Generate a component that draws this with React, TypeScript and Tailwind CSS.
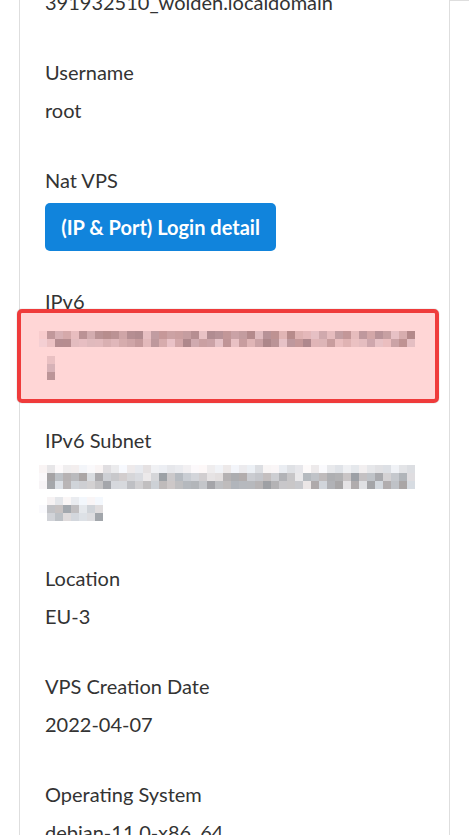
import React from 'react';

type Band = { y: number; x: number; cols: number; light?: boolean; fadeFirst?: boolean };

function makeRng(seed: number) {
  let s = seed % 2147483647;
  return () => {
    s = (s * 16807) % 2147483647;
    return (s - 1) / 2147483646;
  };
}

// pixelated (blurred) text, drawn as a grid of 8px cells
function Mosaic({ width, height, bands, seed }: { width: number; height: number; bands: Band[]; seed: number }) {
  const rnd = makeRng(seed);
  const cells: React.ReactNode[] = [];
  bands.forEach((b, bi) => {
    for (let i = 0; i < b.cols; i++) {
      let g: number;
      if (b.fadeFirst && i === 0) g = 244 + rnd() * 8;
      else if (b.light) g = 222 + rnd() * 28;
      else g = 160 + rnd() * 74;
      const tint = (rnd() - 0.5) * 10;
      const r = Math.round(g + tint);
      const gg = Math.round(g);
      const bl = Math.round(g - tint * 0.6 + 3);
      cells.push(
        <rect
          key={`${bi}-${i}`}
          x={b.x + i * 8}
          y={b.y}
          width={8}
          height={8}
          fill={`rgb(${r},${gg},${bl})`}
        />
      );
    }
  });
  return (
    <svg width={width} height={height} className="block -ml-[6px] shrink-0">
      {cells}
    </svg>
  );
}

function Label({ children, className = '' }: { children: React.ReactNode; className?: string }) {
  return <div className={`leading-[30px] ${className}`}>{children}</div>;
}

export default function App() {
  return (
    <div className="h-[835px] overflow-hidden bg-white font-['Lato','Noto_Sans',sans-serif] text-[20px] text-[#333333]">
      <div className="flex h-full">
        <div className="w-[19px] shrink-0" />
        <div className="w-[431px] shrink-0 border-x border-[#dedede] px-[25px]">
          <div className="flex flex-col">
            <Label className="-mt-[13px]">391932510_wolden.localdomain</Label>

            <Label className="mt-[40px]">Username</Label>
            <Label className="mt-[8px]">root</Label>

            <Label className="mt-[40px]">Nat VPS</Label>
            <div className="mt-[8px]">
              <button className="flex h-[48px] w-[231px] items-center justify-center rounded-[5px] bg-[#1184dc] font-bold text-white">
                (IP &amp; Port) Login detail
              </button>
            </div>

            <Label className="mt-[35px]">IPv6</Label>
            <div className="relative mt-[8px] h-[60px]">
              <Mosaic
                width={376}
                height={60}
                seed={97}
                bands={[
                  { y: 7, x: 0, cols: 47, fadeFirst: true },
                  { y: 15, x: 0, cols: 47, fadeFirst: true },
                  { y: 32, x: 8, cols: 1, light: true },
                  { y: 40, x: 8, cols: 1 },
                  { y: 48, x: 8, cols: 1 },
                ]}
              />
              <div className="absolute -left-[28px] -right-[15px] -top-[15px] -bottom-[19px] rounded-[5px] border-4 border-[#ef3b3b] bg-[rgba(255,0,0,0.16)] shadow-[0_0_1px_rgba(0,0,0,0.5)]" />
            </div>

            <Label className="mt-[41px]">IPv6 Subnet</Label>
            <div className="mt-[8px] h-[60px]">
              <Mosaic
                width={376}
                height={60}
                seed={4242}
                bands={[
                  { y: 2, x: 0, cols: 47, light: true, fadeFirst: true },
                  { y: 10, x: 0, cols: 47, fadeFirst: true },
                  { y: 18, x: 0, cols: 47, fadeFirst: true },
                  { y: 34, x: 8, cols: 7, light: true },
                  { y: 42, x: 0, cols: 8, fadeFirst: true },
                  { y: 50, x: 8, cols: 7 },
                ]}
              />
            </div>

            <Label className="mt-[40px]">Location</Label>
            <Label className="mt-[8px]">EU-3</Label>

            <Label className="mt-[40px]">VPS Creation Date</Label>
            <Label className="mt-[8px]">2022-04-07</Label>

            <Label className="mt-[40px]">Operating System</Label>
            <Label className="mt-[8px]">debian-11.0-x86_64</Label>
          </div>
        </div>
        <div className="flex-1 border-t border-[#dedede]" />
      </div>
    </div>
  );
}
